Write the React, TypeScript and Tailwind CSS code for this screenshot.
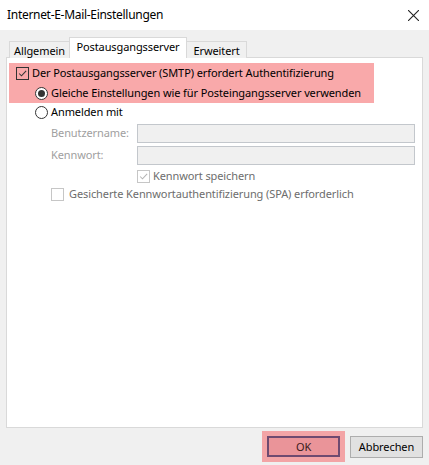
import React from 'react';

const CheckMark = ({ color }: { color: string }) => (
  <svg viewBox="0 0 13 13" className="w-full h-full">
    <path d="M2.5 6.5 L5.3 9.3 L10.8 3.3" fill="none" stroke={color} strokeWidth="1.2" />
  </svg>
);

const Checkbox = ({ checked, disabled }: { checked?: boolean; disabled?: boolean }) => (
  <span
    className={
      'w-[13px] h-[13px] shrink-0 border ' +
      (disabled ? 'border-[#c6c6c6] bg-white' : 'border-[#333333]')
    }
  >
    {checked && <CheckMark color={disabled ? '#b4b4b4' : '#333333'} />}
  </span>
);

const Radio = ({ checked }: { checked?: boolean }) => (
  <span className="w-[13px] h-[13px] shrink-0 rounded-full border border-[#333333] bg-white flex items-center justify-center">
    {checked && <span className="w-[7px] h-[7px] rounded-full bg-[#333333]" />}
  </span>
);

const App: React.FC = () => {
  return (
    <div className="w-[429px] h-[465px] bg-[#f0f0f0] flex flex-col font-['Noto_Sans',sans-serif] text-[11px] tracking-[-0.1px] text-[#000] whitespace-nowrap overflow-hidden">
      {/* title bar */}
      <div className="h-[30px] bg-white flex items-center justify-between pl-[7px] pr-[10px] shrink-0">
        <span className="text-[12px] tracking-[-0.3px]">Internet-E-Mail-Einstellungen</span>
        <svg viewBox="0 0 10 10" className="w-[11px] h-[11px]">
          <path d="M0 0 L10 10 M10 0 L0 10" stroke="#222" strokeWidth="1" />
        </svg>
      </div>

      <div className="flex-1 flex flex-col px-[6px] pt-[7px]">
        {/* tabs */}
        <div className="flex items-end pl-[3px] h-[21px] -mb-px relative z-10">
          <div className="w-[61px] h-[17px] border border-b-0 border-[#d9d9d9] bg-[#f0f0f0] flex items-center justify-center leading-none">
            Allgemein
          </div>
          <div className="w-[118px] h-[21px] border border-b-0 border-[#d9d9d9] bg-white flex items-center justify-center leading-none -mx-px pb-[3px]">
            Postausgangsserver
          </div>
          <div className="w-[61px] h-[17px] border border-b-0 border-[#d9d9d9] bg-[#f0f0f0] flex items-center justify-center leading-none">
            Erweitert
          </div>
        </div>

        {/* panel */}
        <div className="h-[371px] bg-white border border-[#d9d9d9] pt-[5px] pl-[2px] flex flex-col">
          <div className="w-[365px] bg-[#f9a9aa] flex flex-col">
            <div className="h-[20px] flex items-center pl-[7px] gap-[3px]">
              <Checkbox checked />
              <span>Der Postausgangsserver (SMTP) erfordert Authentifizierung</span>
            </div>
            <div className="h-[20px] flex items-center pl-[26px] gap-[3px]">
              <Radio checked />
              <span>Gleiche Einstellungen wie für Posteingangsserver verwenden</span>
            </div>
          </div>
          <div className="h-[19px] flex items-center pl-[26px] gap-[3px]">
            <Radio />
            <span>Anmelden mit</span>
          </div>

          <div className="flex flex-col gap-[3px] pl-[42px] pr-[7px] mt-[2px] text-[#a0a0a0]">
            <div className="flex items-center h-[19px]">
              <span className="w-[86px]">Benutzername:</span>
              <div className="flex-1 h-[19px] bg-[#f0f0f0] border border-[#c3c7cc]" />
            </div>
            <div className="flex items-center h-[19px]">
              <span className="w-[86px]">Kennwort:</span>
              <div className="flex-1 h-[19px] bg-[#f0f0f0] border border-[#c3c7cc]" />
            </div>
          </div>

          <div className="h-[18px] flex items-center pl-[128px] gap-[3px] mt-[2px] text-[#6d6d6d]">
            <Checkbox checked disabled />
            <span>Kennwort speichern</span>
          </div>
          <div className="h-[18px] flex items-center pl-[42px] gap-[5px] text-[#6d6d6d]">
            <Checkbox disabled />
            <span>Gesicherte Kennwortauthentifizierung (SPA) erforderlich</span>
          </div>
        </div>

        {/* buttons */}
        <div className="flex justify-end items-center pt-[3px] gap-[5px]">
          <div className="p-[5px] bg-[#f3a4a6]">
            <button className="w-[73px] h-[21px] bg-[#ea9499] border-2 border-[#6e4a70] text-[#3a1a1a] leading-none">
              OK
            </button>
          </div>
          <button className="w-[73px] h-[22px] bg-[#e1e1e1] border border-[#adadad] leading-none">
            Abbrechen
          </button>
        </div>
      </div>
    </div>
  );
};

export default App;
